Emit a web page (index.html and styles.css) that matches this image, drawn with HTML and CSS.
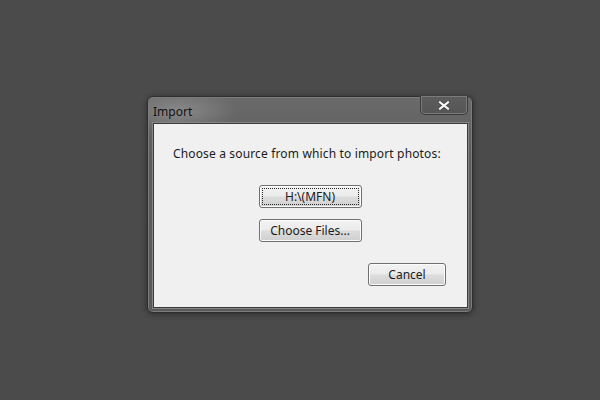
FILE: index.html
```html
<!DOCTYPE html>
<html lang="en">
<head>
  <meta charset="UTF-8" />
  <title>Import</title>
  <link rel="stylesheet" href="styles.css">
</head>
<body>

<div class="window">
  <div class="titlebar">
    <span class="title">Import</span>
    <button class="close" aria-label="Close">
      <svg width="12" height="9" viewBox="0 0 12 9">
        <path d="M2 1.3 L10 7.7 M10 1.3 L2 7.7" stroke="#3a3a3a" stroke-width="3.6" stroke-linecap="square" fill="none"/>
        <path d="M2 1.3 L10 7.7 M10 1.3 L2 7.7" stroke="#f4f4f4" stroke-width="2.2" stroke-linecap="square" fill="none"/>
      </svg>
    </button>
  </div>

  <div class="panel">
    <p class="prompt">Choose a source from which to import photos:</p>
    <div class="sources">
      <button class="btn btn-source focused"><span>H:\(MFN)</span></button>
      <button class="btn btn-source"><span>Choose Files...</span></button>
    </div>
    <div class="actions">
      <button class="btn btn-cancel"><span>Cancel</span></button>
    </div>
  </div>
</div>

</body>
</html>
```

FILE: styles.css
```css
body {
  margin: 0;
  width: 600px;
  height: 400px;
  background: #4b4b4b;
  font-family: "Noto Sans", "DejaVu Sans", sans-serif;
  font-size: 12px;
  color: #1b1b22;
  overflow: hidden;
}

.window {
  margin: 96px 0 0 147px;
  width: 324px;
  height: 215px;
  display: flex;
  flex-direction: column;
  border: 1px solid #2f2f2f;
  border-radius: 6px;
  background:
    radial-gradient(ellipse 60px 22px at 30px 14px, rgba(160, 160, 160, 0.6), rgba(160, 160, 160, 0)),
    linear-gradient(to bottom, #6a6a6a, #5c5c5c 30%, #5a5a5a);
  box-shadow: inset 0 0 0 1px #7c7c7c, 0 1px 6px rgba(0, 0, 0, 0.45);
}

.titlebar {
  height: 26px;
  display: flex;
  justify-content: space-between;
  align-items: flex-start;
  padding: 0 4px 0 5px;
}

.title {
  margin-top: 6px;
  color: #111111;
  font-size: 12px;
}

.close {
  width: 48px;
  height: 19px;
  margin-top: -1px;
  padding: 0;
  display: flex;
  align-items: center;
  justify-content: center;
  border: 1px solid #3a3a3a;
  border-top: none;
  border-radius: 0 0 5px 5px;
  background: linear-gradient(to bottom, #5d5d5d, #555555);
  box-shadow: inset 0 0 0 1px #7a7a7a;
}

.panel {
  flex: 1;
  margin: 0 4px 4px 5px;
  background: #f0f0f0;
  border: 1px solid #3b3b3b;
  box-shadow: 0 0 0 1px #858585;
  display: flex;
  flex-direction: column;
  padding: 0 21px 21px 20px;
}

.prompt {
  margin: 21px 0 0 -1px;
  line-height: 18px;
  white-space: nowrap;
  letter-spacing: 0.15px;
}

.sources {
  display: flex;
  flex-direction: column;
  align-items: center;
  gap: 11px;
  margin-top: 22px;
}

.btn {
  height: 23px;
  padding: 2px;
  font-family: inherit;
  font-size: 12px;
  color: #1b1b22;
  border: 1px solid #707070;
  border-radius: 3px;
  background: linear-gradient(to bottom, #f2f2f2, #ebebeb 48%, #dddddd 52%, #cfcfcf);
  box-shadow: inset 0 0 0 1px #fcfcfc;
}

.btn span {
  display: flex;
  align-items: center;
  justify-content: center;
  height: 100%;
  border: 1px dotted transparent;
  box-sizing: border-box;
}

.btn.focused span {
  border-color: #2a2a2a;
}

.btn-source {
  width: 103px;
}

.actions {
  margin-top: auto;
  display: flex;
  justify-content: flex-end;
}

.btn-cancel {
  width: 78px;
}
```
